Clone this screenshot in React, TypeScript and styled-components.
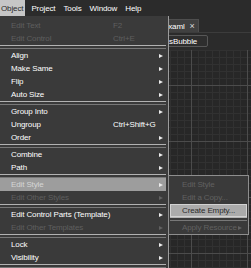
import styled, { createGlobalStyle } from "styled-components";

const GlobalStyle = createGlobalStyle`
    html, body {
        margin: 0;
        padding: 0;
        background: #262626;
        overflow: hidden;
    }
    * {
        box-sizing: border-box;
    }
`;

const Page = styled.div`
    position: relative;
    width: 251px;
    height: 268px;
    overflow: hidden;
    display: flex;
    flex-direction: column;
    font-family: "Liberation Sans", Arial, sans-serif;
    font-size: 8px;
    letter-spacing: -0.12px;
    color: #fff;
`;

const MenuBar = styled.div`
    height: 16px;
    display: flex;
    align-items: stretch;
    gap: 5px;
    background: #2b2b2b;
`;

const MenuBarItem = styled.div<{ $active?: boolean }>`
    display: flex;
    align-items: center;
    padding: 0 2px 0 1px;
    background: ${props => (props.$active ? "#c6c6c6" : "transparent")};
    color: ${props => (props.$active ? "#2a2a2a" : "#ffffff")};
`;

const TabStrip = styled.div`
    height: 17px;
    display: flex;
    align-items: flex-end;
    padding-left: 125px;
    background: #2b2b2b;
    border-bottom: 1px solid #3c3c3c;
`;

const Tab = styled.div`
    height: 13px;
    display: flex;
    align-items: center;
    gap: 5px;
    padding: 0 3px 0 5px;
    background: #404040;
    border: 1px solid #4e4e4e;
    border-bottom: none;
`;

const Close = styled.span`
    font-size: 9px;
    color: #d8d8d8;
`;

const CrumbRow = styled.div`
    height: 17px;
    padding: 2px 0 0 146px;
    background: #2b2b2b;
`;

const Crumb = styled.div`
    display: inline-flex;
    align-items: center;
    height: 12px;
    padding: 0 10px 0 4px;
    background: #2e2e2e;
    border: 1px solid #575757;
    border-radius: 2px;
`;

const Canvas = styled.div`
    flex: 1;
    background-color: #272727;
    background-image:
        linear-gradient(to right, #4c4c4c 1px, transparent 1px),
        linear-gradient(to bottom, #4c4c4c 1px, transparent 1px),
        linear-gradient(to right, #313131 1px, transparent 1px),
        linear-gradient(to bottom, #313131 1px, transparent 1px);
    background-size: 56px 56px, 56px 56px, 7px 7px, 7px 7px;
    background-position: 23px 0, 0 35px, 2px 0, 0 0;
`;

const Menu = styled.div`
    position: absolute;
    left: 0;
    top: 16px;
    width: 169px;
    height: 260px;
    padding-top: 3px;
    background: #3a3a3a;
    border-right: 1px solid #9c9c9c;
`;

const Item = styled.div<{ $disabled?: boolean; $hover?: boolean }>`
    height: 13px;
    margin-right: 2px;
    padding: 0 3px 0 11px;
    display: grid;
    grid-template-columns: 102px 1fr 4px;
    align-items: center;
    line-height: 13px;
    white-space: nowrap;
    background: ${props => (props.$hover ? "#9d9d9d" : "transparent")};
    color: ${props =>
        props.$disabled ? "#5f5f5f" : props.$hover ? "#d6d6d6" : "#ffffff"};
`;

const Shortcut = styled.span`
    white-space: nowrap;
`;

const Arrow = styled.span<{ $dim?: boolean }>`
    width: 0;
    height: 0;
    flex: none;
    border-left: 4px solid ${props => (props.$dim ? "#616161" : "#ececec")};
    border-top: 2.5px solid transparent;
    border-bottom: 2.5px solid transparent;
`;

const Separator = styled.div<{ $inset?: number }>`
    height: 4px;
    margin: 0 ${props => props.$inset ?? 2}px 0 ${props => (props.$inset ? props.$inset : 0)}px;
    display: flex;
    align-items: center;
    &::before {
        content: "";
        flex: 1;
        height: 2px;
        border-top: 1px solid #b2b2b2;
        border-bottom: 1px solid #787878;
    }
`;

const SubMenu = styled.div`
    position: absolute;
    left: 168px;
    top: 175px;
    width: 81px;
    padding: 2px 0 0;
    background: #3a3a3a;
    border: 1px solid #8e8e8e;
`;

const SubItem = styled.div<{ $disabled?: boolean; $hover?: boolean }>`
    height: 13px;
    margin: 0 1px;
    padding: 0 5px 0 ${props => (props.$hover ? 11 : 12)}px;
    display: flex;
    align-items: center;
    justify-content: space-between;
    line-height: 13px;
    white-space: nowrap;
    background: ${props => (props.$hover ? "#ababab" : "transparent")};
    border: ${props => (props.$hover ? "1px solid #d2d2d2" : "none")};
    color: ${props =>
        props.$disabled ? "#616161" : props.$hover ? "#2c2c2c" : "#ffffff"};
`;

interface Entry {
    label?: string;
    shortcut?: string;
    sub?: boolean;
    disabled?: boolean;
    hover?: boolean;
    sep?: boolean;
}

const entries: Entry[] = [
    { label: "Edit Text", shortcut: "F2", disabled: true },
    { label: "Edit Control", shortcut: "Ctrl+E", disabled: true },
    { sep: true },
    { label: "Align", sub: true },
    { label: "Make Same", sub: true },
    { label: "Flip", sub: true },
    { label: "Auto Size", sub: true },
    { sep: true },
    { label: "Group Into", sub: true },
    { label: "Ungroup", shortcut: "Ctrl+Shift+G" },
    { label: "Order", sub: true },
    { sep: true },
    { label: "Combine", sub: true },
    { label: "Path", sub: true },
    { sep: true },
    { label: "Edit Style", sub: true, hover: true },
    { label: "Edit Other Styles", sub: true, disabled: true },
    { sep: true },
    { label: "Edit Control Parts (Template)", sub: true },
    { label: "Edit Other Templates", sub: true, disabled: true },
    { sep: true },
    { label: "Lock", sub: true },
    { label: "Visibility", sub: true },
    { sep: true },
];

function App() {
    return (
        <Page>
            <GlobalStyle />
            <MenuBar>
                <MenuBarItem $active>Object</MenuBarItem>
                <MenuBarItem>Project</MenuBarItem>
                <MenuBarItem>Tools</MenuBarItem>
                <MenuBarItem>Window</MenuBarItem>
                <MenuBarItem>Help</MenuBarItem>
            </MenuBar>
            <TabStrip>
                <Tab>
                    MainPage.xaml<Close>×</Close>
                </Tab>
            </TabStrip>
            <CrumbRow>
                <Crumb>StatusBubble</Crumb>
            </CrumbRow>
            <Canvas />

            <Menu>
                {entries.map((e, i) =>
                    e.sep ? (
                        <Separator key={i} />
                    ) : (
                        <Item key={i} $disabled={e.disabled} $hover={e.hover}>
                            <span>{e.label}</span>
                            <Shortcut>{e.shortcut}</Shortcut>
                            {e.sub ? <Arrow $dim={e.disabled} /> : <span />}
                        </Item>
                    )
                )}
            </Menu>

            <SubMenu>
                <SubItem $disabled>Edit Style</SubItem>
                <SubItem $disabled>Edit a Copy...</SubItem>
                <SubItem $hover>Create Empty...</SubItem>
                <Separator $inset={1} />
                <SubItem $disabled>
                    Apply Resource <Arrow $dim />
                </SubItem>
            </SubMenu>
        </Page>
    );
}

export default App;
